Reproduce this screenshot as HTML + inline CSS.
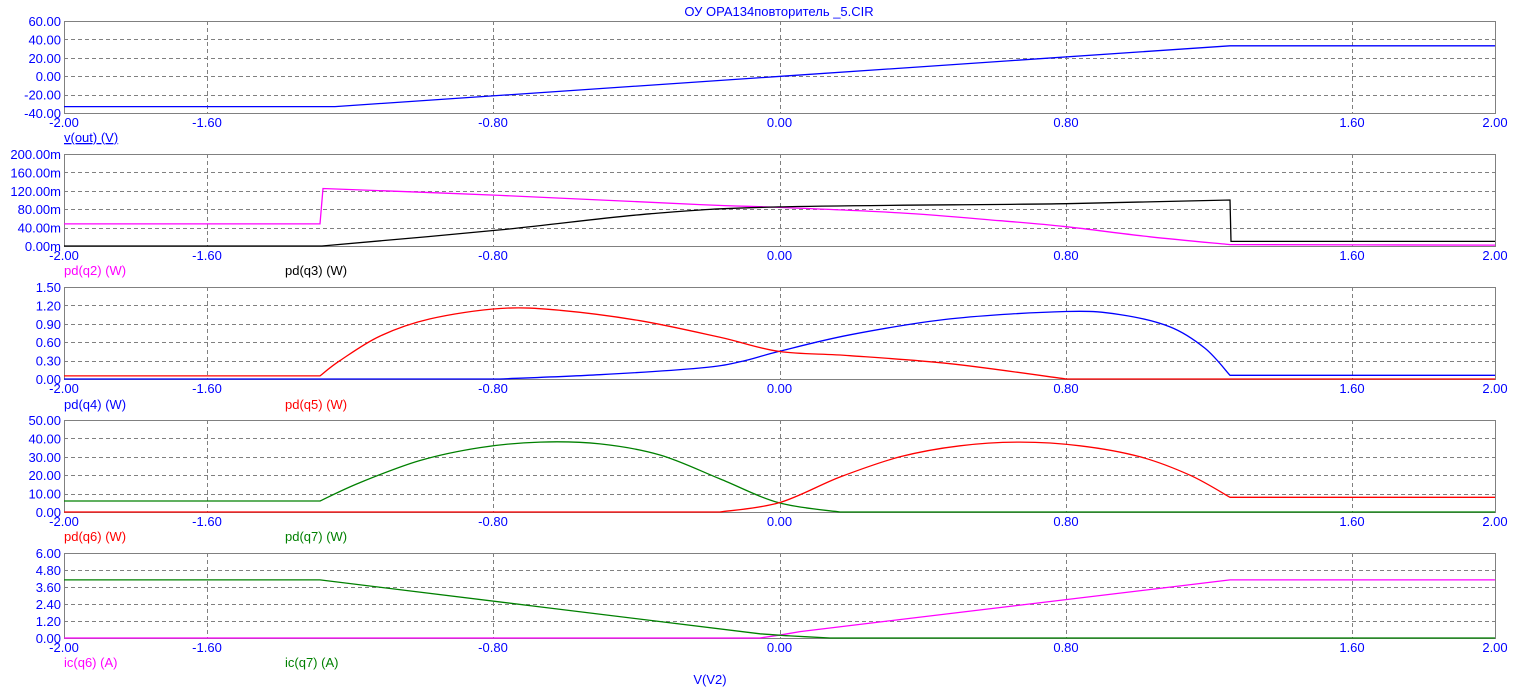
<!DOCTYPE html>
<html><head><meta charset="utf-8"><style>
html,body{margin:0;padding:0;background:#fff;width:1532px;height:700px;overflow:hidden}
text{font-family:"Liberation Sans",sans-serif;font-size:13px}
</style></head><body>
<svg id="sv" width="1532" height="700" xmlns="http://www.w3.org/2000/svg">
<text x="779" y="16" fill="#0000ff" text-anchor="middle">ОУ OPA134повторитель _5.CIR</text>
<text x="710" y="684" fill="#0000ff" text-anchor="middle">V(V2)</text>
<g id="grids" stroke="#808080" stroke-width="1" fill="none"></g>
</svg>
<script>
var s=document.getElementById('sv'),g=document.getElementById('grids');
var NS='http://www.w3.org/2000/svg';
function el(t,a,p,txt){var e=document.createElementNS(NS,t);for(var k in a)e.setAttribute(k,a[k]);if(txt!==undefined)e.textContent=txt;(p||s).appendChild(e);return e;}
var L=64,R=1495;
var xl=[['-2.00',64],['-1.60',207],['-0.80',493],['0.00',779.5],['0.80',1066],['1.60',1352],['2.00',1495]];
var panels=[
 [21,113,['60.00','40.00','20.00','0.00','-20.00','-40.00']],
 [154,246,['200.00m','160.00m','120.00m','80.00m','40.00m','0.00m']],
 [287,379,['1.50','1.20','0.90','0.60','0.30','0.00']],
 [420,512,['50.00','40.00','30.00','20.00','10.00','0.00']],
 [553,638,['6.00','4.80','3.60','2.40','1.20','0.00']]];
panels.forEach(function(p){
 var t=p[0],b=p[1],h=(b-t)/5;
 for(var i=1;i<5;i++){var y=Math.round(t+h*i)+0.5;el('line',{x1:L,x2:R,y1:y,y2:y,'stroke-dasharray':'4,3'},g);}
 [207,493,779.5,1066,1352].forEach(function(x){x=Math.round(x)+0.5;el('line',{x1:x,x2:x,y1:t,y2:b,'stroke-dasharray':'4,3'},g);});
 el('rect',{x:L+0.5,y:t+0.5,width:R-L,height:b-t},g);
 for(var i=0;i<6;i++)el('text',{x:61,y:t+h*i+5,fill:'#0000ff','text-anchor':'end'},s,p[2][i]);
 xl.forEach(function(q){el('text',{x:q[1],y:b+14,fill:'#0000ff','text-anchor':'middle'},s,q[0]);});
});
function pl(segs,c,t,b,mn,mx){
 var d='';
 segs.forEach(function(pts,si){
  var P=pts.map(function(q){return [q[0],t+(mx-q[1])/(mx-mn)*(b-t)];});
  d+=(si?'L':'M')+P[0][0]+' '+P[0][1].toFixed(1);
  for(var i=0;i<P.length-1;i++){
   var p0=P[i-1]||P[i],p1=P[i],p2=P[i+1],p3=P[i+2]||P[i+1];
   var c1=[p1[0]+(p2[0]-p0[0])/6,p1[1]+(p2[1]-p0[1])/6],c2=[p2[0]-(p3[0]-p1[0])/6,p2[1]-(p3[1]-p1[1])/6];
   d+=' C'+c1[0].toFixed(1)+' '+c1[1].toFixed(1)+' '+c2[0].toFixed(1)+' '+c2[1].toFixed(1)+' '+p2[0]+' '+p2[1].toFixed(1);
  }
 });
 el('path',{d:d,stroke:c,'stroke-width':1.3,fill:'none'});}
pl([[[64,-33],[335,-33]],[[335,-33],[1230,33]],[[1230,33],[1495,33]]],'#0000ff',21,113,-40,60);
pl([[[64,48],[320,48]],[[323,125],[500,110],[700,90],[779,84],[900,72],[1000,55],[1066,42],[1150,20],[1230,3]],[[1230,3],[1495,2]]],'#ff00ff',154,246,0,200);
pl([[[64,0],[322,0]],[[322,0],[500,35],[650,70],[779,85],[1066,92],[1230,100]],[[1231,10],[1495,10]]],'#000000',154,246,0,200);
pl([[[64,0],[500,0]],[[500,0],[600,0.07],[700,0.18],[740,0.28],[779,0.45],[850,0.72],[950,0.98],[1066,1.1],[1120,1.05],[1170,0.85],[1205,0.5],[1230,0.06]],[[1230,0.06],[1495,0.06]]],'#0000ff',287,379,0,1.5);
pl([[[64,0.05],[320,0.05]],[[320,0.05],[340,0.3],[380,0.7],[430,0.98],[500,1.15],[560,1.12],[640,0.95],[720,0.68],[779,0.45],[850,0.38],[950,0.25],[1066,0]],[[1066,0],[1495,0]]],'#ff0000',287,379,0,1.5);
pl([[[64,6],[320,6]],[[320,6],[360,16],[420,28],[480,35],[540,38],[600,37],[660,31],[720,18],[779,5],[840,0]],[[840,0],[1495,0]]],'#008000',420,512,0,50);
pl([[[64,0],[720,0]],[[720,0],[779,5],[840,19],[900,30],[960,36],[1020,38],[1080,36],[1140,30],[1190,20],[1230,8]],[[1230,8],[1495,8]]],'#ff0000',420,512,0,50);
pl([[[64,0],[760,0]],[[760,0],[779,0.2],[800,0.45]],[[800,0.45],[1230,4.1]],[[1230,4.1],[1495,4.1]]],'#ff00ff',553,638,0,6);
pl([[[64,4.1],[320,4.1]],[[320,4.1],[760,0.3]],[[760,0.3],[790,0.15],[830,0]],[[830,0],[1495,0]]],'#008000',553,638,0,6);
var lg=[[64,142,'v(out) (V)','#0000ff',1],[64,275,'pd(q2) (W)','#ff00ff'],[285,275,'pd(q3) (W)','#000000'],
[64,409,'pd(q4) (W)','#0000ff'],[285,409,'pd(q5) (W)','#ff0000'],[64,541,'pd(q6) (W)','#ff0000'],[285,541,'pd(q7) (W)','#008000'],
[64,667,'ic(q6) (A)','#ff00ff'],[285,667,'ic(q7) (A)','#008000']];
lg.forEach(function(q){var e=el('text',{x:q[0],y:q[1],fill:q[3]},s,q[2]);if(q[4])e.setAttribute('text-decoration','underline');});
</script>
</body></html>
